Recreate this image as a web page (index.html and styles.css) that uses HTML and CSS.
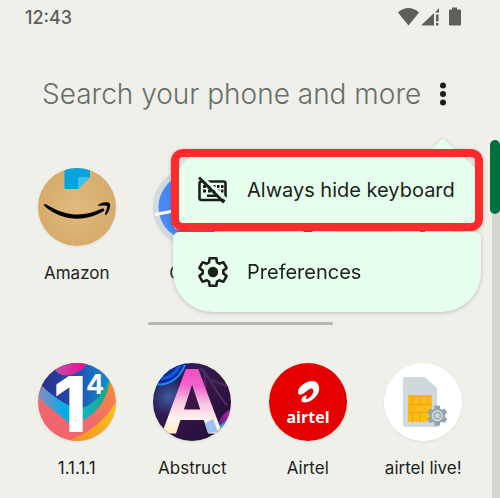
FILE: index.html
```
<!DOCTYPE html>
<html lang="en">
<head>
	<title>App drawer</title>
	<meta charset="utf-8">
	<meta name="viewport" content="width=device-width, initial-scale=1">
	<link rel="stylesheet" href="styles.css">
</head>
<body>
	<header class="status">
		<time>12:43</time>
		<svg width="64" height="20" viewBox="0 0 64 20" fill="#5e5e5c">
			<path d="M0 5.500C6-.5 15-.5 21 5.500L10.500 18.500z"/>
			<path d="M23 18.500L36 6v12.500zM37 5.500L41 1v4.500zM38 7.500h2.500v7H38zM38 16h2.500v2.500H38z"/>
			<path d="M51 2.500h3V.5h5v2h3q1 0 1 1v14q0 1-1 1H52q-1 0-1-1v-14q0-1 1-1z"/>
		</svg>
	</header>

	<div class="search">
		<input type="text" id="query" aria-label="Search your phone and more" placeholder="Search your phone and more">
		<button type="button" class="more" aria-label="More options">
			<svg width="10" height="24" viewBox="0 0 10 24" fill="#1b1c1b">
				<circle cx="5" cy="3.500" r="3"/>
				<circle cx="5" cy="12" r="3"/>
				<circle cx="5" cy="20.500" r="3"/>
			</svg>
		</button>
		<div class="menu">
			<button type="button" class="item first">
				<svg width="30" height="28" viewBox="0 0 30 28">
					<rect x="1.500" y="5.500" width="26" height="18.500" rx="2" fill="none" stroke="#1b1f1c" stroke-width="2.600"/>
					<path d="M5 9h3v3H5zM10 9h3v3h-3zM14.500 9h3v3h-3zM19 9h2.500v3H19zM23 9h2.500v3H23zM5 13.500h3v3H5zM10 13.500h3v3h-3zM14.500 13.500h3v3h-3zM19 13.500h2.500v3H19zM23 13.500h2.500v3H23zM9 18.500h11v2.500H9z" fill="#1b1f1c"/>
					<path d="M3 0L29 24" stroke="#e6ffec" stroke-width="3"/>
					<path d="M1 1.500L26 26.500" stroke="#1b1f1c" stroke-width="2.800"/>
				</svg>
				<span>Always hide keyboard</span>
			</button>
			<button type="button" class="item last">
				<svg width="30" height="30" viewBox="1.600 1.600 20.800 20.800" fill="none" stroke="#1b1f1c" stroke-width="1.800">
					<path id="gear" d="M19.140 12.940c.04-.3.06-.61.06-.94 0-.32-.02-.64-.07-.94l2.030-1.580c.18-.14.23-.41.12-.61l-1.920-3.320c-.12-.22-.37-.29-.59-.22l-2.390.96c-.5-.38-1.030-.7-1.620-.94l-.36-2.540c-.04-.24-.24-.41-.48-.41h-3.840c-.24 0-.43.17-.47.41l-.36 2.540c-.59.24-1.130.57-1.620.94l-2.390-.96c-.22-.08-.47 0-.59.22L2.740 8.870c-.12.21-.08.47.12.61l2.030 1.580c-.05.3-.09.63-.09.94s.02.64.07.94l-2.030 1.580c-.18.14-.23.41-.12.61l1.920 3.320c.12.22.37.29.59.22l2.390-.96c.5.38 1.030.7 1.620.94l.36 2.540c.05.24.24.41.48.41h3.840c.24 0 .44-.17.47-.41l.36-2.540c.59-.24 1.130-.56 1.620-.94l2.390.96c.22.08.47 0 .59-.22l1.920-3.320c.12-.22.07-.47-.12-.61l-2.010-1.580z"/>
					<circle cx="12" cy="12" r="3.600" fill="#1b1f1c" stroke="none"/>
				</svg>
				<span>Preferences</span>
			</button>
			<div class="highlight"></div>
		</div>
	</div>

	<main class="drawer">
		<div class="lists">
			<div class="row">
				<a href="#" class="app">
					<svg class="icon" viewBox="0 0 78 78">
						<defs>
							<radialGradient id="box"><stop offset="0" stop-color="#e0ba80"/><stop offset="1" stop-color="#d6ac6c"/></radialGradient>
							<clipPath id="round"><circle cx="39" cy="39" r="39"/></clipPath>
						</defs>
						<g clip-path="url(#round)">
							<rect width="78" height="78" fill="url(#box)"/>
							<path d="M26.500 0H52v9L40 21H28q-1.500 0-1.500-1.500z" fill="#07a3de"/>
							<path d="M40 21V11q0-2 2-2h10z" fill="#36c1f8"/>
						</g>
						<path d="M6 36.500C7 35 9 37 12 38.500C31 49.500 48 48 63 41C66 39.500 67.500 42 65 43.500C48 53.500 25 54 7 38.500C6 37.500 5.500 37 6 36.500z"/>
						<path d="M60 37C63 34 71 33 72 36C72.500 40 70.500 44.500 68 47C66.500 47.500 67 46 67.500 44.500C68.500 42 69.500 39 69 38C67.500 37 63 37.500 60.500 38z"/>
					</svg>
					<span>Amazon</span>
				</a>
				<a href="#" class="app">
					<svg class="icon" viewBox="0 0 78 78">
						<circle cx="39" cy="39" r="39" fill="#d0dadf"/>
						<circle cx="39" cy="39" r="33.500" fill="#4a88f5"/>
						<path d="M2 46.500L39 39.500" stroke="#fff" stroke-width="3"/>
					</svg>
					<span>Clock</span>
				</a>
				<a href="#" class="app" aria-label="App">
					<svg class="icon" viewBox="0 0 78 78">
						<circle cx="39" cy="39" r="39" fill="#fff"/>
						<circle cx="39" cy="58" r="7" fill="#ea3c12"/>
					</svg>
				</a>
				<a href="#" class="app" aria-label="App">
					<svg class="icon" viewBox="0 0 78 78">
						<circle cx="39" cy="39" r="39" fill="#fff"/>
						<rect x="36" y="56" width="5" height="9" fill="#34a853"/>
					</svg>
				</a>
			</div>
			<div class="divider"></div>
			<div class="row">
				<a href="#" class="app">
					<svg class="icon" viewBox="0 0 78 78">
						<defs>
							<linearGradient id="blue"><stop offset="0" stop-color="#2b2a86"/><stop offset=".5" stop-color="#2350ad"/><stop offset="1" stop-color="#0a9be0"/></linearGradient>
							<linearGradient id="band"><stop offset="0" stop-color="#9384bd"/><stop offset=".35" stop-color="#05aee3"/><stop offset=".55" stop-color="#0fb0cf"/><stop offset="1" stop-color="#20ad7c"/></linearGradient>
							<linearGradient id="coral" x1="0" y1="1" x2="1" y2="0"><stop offset="0" stop-color="#f0606e"/><stop offset=".5" stop-color="#f06d6d"/><stop offset="1" stop-color="#f7962a"/></linearGradient>
							<linearGradient id="magenta"><stop offset="0" stop-color="#c04fa6"/><stop offset="1" stop-color="#ea0b8c"/></linearGradient>
							<linearGradient id="yellow" x1="0" y1="1" x2="1" y2="0"><stop offset="0" stop-color="#f78c22"/><stop offset="1" stop-color="#fcc916"/></linearGradient>
						</defs>
						<g clip-path="url(#round)">
							<rect width="78" height="78" fill="url(#coral)"/>
							<path d="M28 78C50 72 68 56 78 39V78z" fill="url(#yellow)"/>
							<path d="M0 20L72 14C71 32 62 50 40 60Q35 62 30 59L0 35z" fill="url(#band)"/>
							<path d="M0 0H78L71 16C66 30 58 40 44 45Q38 47 32 43Q16 35 3 22z" fill="url(#blue)"/>
							<path d="M16 6C22 15 37 16 50 0H16z" fill="url(#magenta)"/>
						</g>
						<text class="one" x="15" y="69">1</text>
						<text class="four" x="48" y="31">4</text>
					</svg>
					<span>1.1.1.1</span>
				</a>
				<a href="#" class="app">
					<svg class="icon" viewBox="0 0 78 78">
						<defs>
							<radialGradient id="glow"><stop offset="0" stop-color="#405c9c"/><stop offset="1" stop-color="#405c9c" stop-opacity="0"/></radialGradient>
							<linearGradient id="plum" x1="0" y1="0" x2="1" y2="1"><stop offset="0" stop-color="#172370"/><stop offset=".5" stop-color="#371746"/><stop offset="1" stop-color="#1b0a38"/></linearGradient>
							<linearGradient id="letter" gradientUnits="userSpaceOnUse" x1="42" y1="5" x2="36" y2="74"><stop offset="0" stop-color="#f050bd"/><stop offset=".25" stop-color="#f55fce"/><stop offset=".5" stop-color="#f8c7e1"/><stop offset=".75" stop-color="#fff4ef"/><stop offset="1" stop-color="#fdeeb8"/></linearGradient>
							<linearGradient id="violet" x1="0" y1="1" x2="1" y2="0"><stop offset="0" stop-color="#2c0a55"/><stop offset="1" stop-color="#c52bb5"/></linearGradient>
						</defs>
						<g clip-path="url(#round)">
							<rect width="78" height="78" fill="url(#plum)"/>
							<circle cx="16" cy="34" r="19" fill="url(#glow)"/>
							<path d="M0 22C16 20 29 17 33 0H10z" fill="#0b2ba3"/>
							<path d="M2 21C14 23 26 17 32 2" fill="none" stroke="#168ff2" stroke-width="2"/>
							<path d="M7 15C15 17 23 10 27 2" fill="none" stroke="#105cd2" stroke-width="3"/>
							<path d="M47 5C60 16 61 29 74 42M51 7Q56 33 44 37M58 17L77 24" fill="none" stroke="#502a62" stroke-width="2"/>
							<path d="M60 70C67 54 72 48 80 46V78H58z" fill="url(#violet)"/>
							<path d="M61 65C68 63 72 58 78 53V78H60z" fill="#08b6e8"/>
							<text class="letter" x="39" y="71" fill="url(#letter)">A</text>
							<path d="M52 60L60 56L65 69L55 70z" fill="#91b8f8" opacity=".85"/>
						</g>
					</svg>
					<span>Abstruct</span>
				</a>
				<a href="#" class="app">
					<svg class="icon" viewBox="0 0 78 78">
						<circle cx="39" cy="39" r="39" fill="#e40000"/>
						<path d="M29 30C28 25 36 18 43 18C49 18 51 23 50 28C48 35 40 40 35 39.500C31 39 32 34 36 32.500C38 32 38.500 33.500 37 35C36 36.500 38 36.500 40 35C44 32 46 27 43 25.500C40 24.500 37 30 32 31.500C30.500 32 29.500 31.500 29 30z" fill="#fff"/>
						<text class="brand" x="39" y="60">airtel</text>
					</svg>
					<span>Airtel</span>
				</a>
				<a href="#" class="app">
					<svg class="icon" viewBox="0 0 78 78">
						<defs>
							<linearGradient id="chip" x1="0" y1="0" x2="1" y2="1"><stop offset="0" stop-color="#ffb30f"/><stop offset="1" stop-color="#fdc21c"/></linearGradient>
						</defs>
						<circle cx="39" cy="39" r="39" fill="#fff"/>
						<path d="M21 14H41L53 25V64H21Q19 64 19 62V16Q19 14 21 14z" fill="#cfd8dc"/>
						<rect x="24" y="32" width="24" height="27" rx="1" fill="url(#chip)"/>
						<path d="M24 41.500H48M24 49.500H48M28.500 32V41.500M36 32V41.500M44 32V41.500M28.500 49.500V59M36 49.500V59" fill="none" stroke="#f2a019"/>
						<use href="#gear" fill="#90a4ae" transform="translate(40.500 40) scale(1.060)"/>
						<circle cx="53.300" cy="52.700" r="5" fill="#b0bec5" stroke="#d5dde0" stroke-width="1.200"/>
						<circle cx="53.300" cy="52.700" r="3" fill="#cfd8dc" stroke="#90a4ae"/>
					</svg>
					<span>airtel live!</span>
				</a>
			</div>
		</div>
		<div class="scroll"><div class="thumb"></div></div>
	</main>
</body>
</html>
```
FILE: styles.css
```
*{
	box-sizing: border-box;
}
body{
	margin: 0;
	min-height: 100vh;
	display: flex;
	flex-direction: column;
	background: #f0f0eb;
	color: #1b1f1c;
	font-family: Inter, Roboto, sans-serif;
}
button{
	border: 0;
	padding: 0;
	background: none;
	color: inherit;
	font-family: inherit;
}
.status{
	display: flex;
	justify-content: space-between;
	align-items: center;
	height: 34px;
	padding: 0 38px 0 25px;
	color: #5e5e5c;
	font-size: 18px;
	font-weight: 500;
}
.search{
	position: relative;
	display: flex;
	align-items: center;
	height: 106px;
	padding: 14px 49px 0 42px;
}
.search input{
	flex: 1;
	min-width: 0;
	border: 0;
	padding: 0;
	outline: 0;
	background: none;
	font-family: inherit;
	font-size: 28px;
	font-weight: 300;
}
.search input::placeholder{
	color: #686f68;
	opacity: 1;
}
.more{
	display: flex;
	justify-content: center;
	width: 16px;
}
.menu{
	position: absolute;
	z-index: 1;
	top: 116px;
	left: 173px;
	right: 19px;
	display: flex;
	flex-direction: column;
	gap: 2px;
	filter: drop-shadow(0 1px 2px rgba(0,0,0,0.2));
}
/* little arrow pointing at the dots */
.menu:before{
	content: "";
	position: absolute;
	top: -8px;
	right: 28px;
	width: 20px;
	height: 20px;
	border-radius: 3px;
	background: #e6ffec;
	transform: rotate(45deg);
}
.item{
	position: relative;
	display: flex;
	align-items: center;
	gap: 19px;
	height: 80px;
	padding: 0 25px;
	background: #e6ffec;
	font-size: 20px;
	white-space: nowrap;
}
.first{
	border-radius: 40px 40px 6px 6px;
}
.last{
	border-radius: 6px 6px 40px 40px;
}
.highlight{
	position: absolute;
	top: -1px;
	left: -2px;
	right: -2px;
	height: 82px;
	border: 8px solid #ff2a2c;
	border-radius: 12px;
}
.drawer{
	flex: 1;
	display: flex;
}
.lists{
	flex: 1;
	padding: 28px 9px 0 19px;
}
.row{
	display: grid;
	grid-template-columns: repeat(4, 1fr);
}
.app{
	display: flex;
	flex-direction: column;
	align-items: center;
	gap: 16px;
	color: #1b1f1c;
	font-size: 17px;
	line-height: 22px;
	text-decoration: none;
}
.icon{
	width: 78px;
	height: 78px;
	border-radius: 50%;
	box-shadow: 0 1px 3px rgba(0,0,0,0.08);
	overflow: visible;
}
.divider{
	width: 40%;
	height: 3px;
	margin: 38px 0 38px 28%;
	border-radius: 2px;
	background: #b7b8b3;
}
.scroll{
	width: 10px;
	background: linear-gradient(#d6d7d2, #d6d7d2) 2px 60px no-repeat;
}
.thumb{
	height: 74px;
	border-radius: 5px;
	background: #00703c;
}
.one{
	fill: #fff;
	font-size: 77px;
	font-weight: 800;
}
.four{
	fill: #fff;
	font-size: 27px;
	font-weight: 700;
}
.letter{
	font-family: Roboto, sans-serif;
	font-size: 91px;
	font-weight: 700;
	text-anchor: middle;
}
.brand{
	fill: #fff;
	font-family: "Open Sans", sans-serif;
	font-size: 16px;
	font-weight: 700;
	text-anchor: middle;
}
```
